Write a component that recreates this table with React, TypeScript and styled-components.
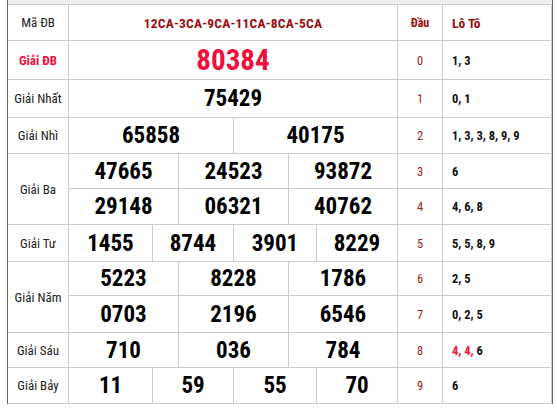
import React from "react";
import styled, { createGlobalStyle } from "styled-components";

const Global = createGlobalStyle`
  html, body { margin: 0; padding: 0; background: #fff; }
  body { font-family: "Roboto Condensed", Roboto, "Liberation Sans", sans-serif; color: #222; }
`;

const Wrapper = styled.div`
  width: 544px;
  margin-left: 7px;
  border-left: 1px solid #666;
  border-right: 1px solid #666;
  background: #fff;
`;

const TopStrip = styled.div`
  height: 4px;
  background: #eee;
`;

const Board = styled.div`
  display: grid;
  grid-template-columns: 60px 328px 44px 108px;
  grid-template-rows: 35px 38px 37px 35px 34px 35px 36px 33px 36px 34px 35px;
  gap: 1px;
  background: #ccc;
  padding: 1px 1px 1px 0;
`;

const Cell = styled.div`
  background: #fff;
  display: flex;
  align-items: center;
  justify-content: center;
  min-width: 0;
`;

const Label = styled(Cell)<{ $span?: number; $hot?: boolean }>`
  grid-column: 1;
  grid-row: span ${(p) => p.$span ?? 1};
  font-size: 13px;
  color: ${(p) => (p.$hot ? "#ef0f3a" : "#222")};
  font-weight: ${(p) => (p.$hot ? 700 : 400)};
`;

const Code = styled(Cell)`
  grid-column: 2;
  font-size: 13.5px;
  font-weight: 700;
  color: #9c0c0c;
  letter-spacing: 0.2px;
`;

const HeadTitle = styled(Cell)`
  grid-column: 3;
  font-size: 12px;
  font-weight: 700;
  color: #9c0c0c;
`;

const TailTitle = styled(Cell)`
  grid-column: 4;
  justify-content: flex-start;
  padding-left: 9px;
  font-size: 13.5px;
  font-weight: 700;
  color: #9c0c0c;
`;

const Prize = styled.div<{ $cols: string }>`
  grid-column: 2;
  display: grid;
  grid-template-columns: ${(p) => p.$cols};
  gap: 1px;
  background: #ccc;
`;

const Num = styled(Cell)<{ $big?: boolean }>`
  font-weight: 700;
  font-size: ${(p) => (p.$big ? "29px" : "23px")};
  color: ${(p) => (p.$big ? "#ef0f3a" : "#000")};
`;

const Head = styled(Cell)`
  grid-column: 3;
  font-size: 12.5px;
  color: #9c1c1c;
`;

const Tail = styled(Cell)`
  grid-column: 4;
  justify-content: flex-start;
  padding-left: 9px;
  font-size: 12.5px;
  font-weight: 700;
  color: #111;
  white-space: pre;
`;

const Hot = styled.span`
  color: #ef0f3a;
`;

type Line = { nums: string[]; cols: string; big?: boolean };
type Group = { label: string; hot?: boolean; lines: Line[] };

const C2 = "164px 163px";
const C3 = "109px 109px 108px";
const C4 = "83px 80px 82px 80px";

const groups: Group[] = [
  { label: "Giải ĐB", hot: true, lines: [{ nums: ["80384"], cols: "1fr", big: true }] },
  { label: "Giải Nhất", lines: [{ nums: ["75429"], cols: "1fr" }] },
  { label: "Giải Nhì", lines: [{ nums: ["65858", "40175"], cols: C2 }] },
  {
    label: "Giải Ba",
    lines: [
      { nums: ["47665", "24523", "93872"], cols: C3 },
      { nums: ["29148", "06321", "40762"], cols: C3 },
    ],
  },
  { label: "Giải Tư", lines: [{ nums: ["1455", "8744", "3901", "8229"], cols: C4 }] },
  {
    label: "Giải Năm",
    lines: [
      { nums: ["5223", "8228", "1786"], cols: C3 },
      { nums: ["0703", "2196", "6546"], cols: C3 },
    ],
  },
  { label: "Giải Sáu", lines: [{ nums: ["710", "036", "784"], cols: C3 }] },
  { label: "Giải Bảy", lines: [{ nums: ["11", "59", "55", "70"], cols: C4 }] },
];

const tails: React.ReactNode[] = [
  "1, 3",
  "0, 1",
  "1, 3, 3, 8, 9, 9",
  "6",
  "4, 6, 8",
  "5, 5, 8, 9",
  "2, 5",
  "0, 2, 5",
  <>
    <Hot>4, 4,</Hot>
    {" 6"}
  </>,
  "6",
];

export default function App() {
  let idx = 0;
  return (
    <>
      <Global />
      <Wrapper>
        <TopStrip />
        <Board>
          <Label>Mã ĐB</Label>
          <Code>12CA-3CA-9CA-11CA-8CA-5CA</Code>
          <HeadTitle>Đầu</HeadTitle>
          <TailTitle>Lô Tô</TailTitle>
          {groups.map((g) =>
            g.lines.map((line, li) => {
              const i = idx++;
              return (
                <React.Fragment key={g.label + li}>
                  {li === 0 && (
                    <Label $span={g.lines.length} $hot={g.hot}>
                      {g.label}
                    </Label>
                  )}
                  <Prize $cols={line.cols}>
                    {line.nums.map((n, ni) => (
                      <Num key={ni} $big={line.big}>
                        {n}
                      </Num>
                    ))}
                  </Prize>
                  <Head>{i}</Head>
                  <Tail>{tails[i]}</Tail>
                </React.Fragment>
              );
            })
          )}
        </Board>
      </Wrapper>
    </>
  );
}
